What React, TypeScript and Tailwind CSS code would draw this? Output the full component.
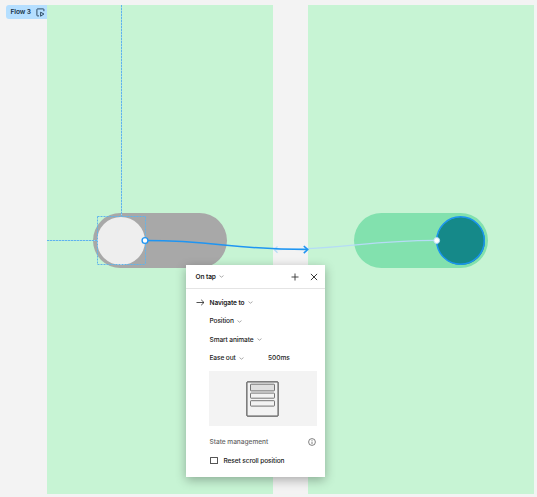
import type { ReactNode } from "react";

function Chevron() {
  return (
    <svg className="ml-[3.5px] h-[3px] w-[5px] shrink-0" viewBox="0 0 5 3" fill="none" stroke="#969696" strokeWidth="0.8">
      <path d="M0.5 0.6 2.5 2.2 4.5 0.6" />
    </svg>
  );
}

function Option({ children, className = "" }: { children: ReactNode; className?: string }) {
  return (
    <div className={`flex items-center ${className}`}>
      <span>{children}</span>
      <Chevron />
    </div>
  );
}

function InteractionPanel() {
  return (
    <section className="absolute left-[186px] top-[265px] flex h-[212px] w-[139px] flex-col bg-white text-[6.6px] font-medium leading-[10px] tracking-[-0.12px] text-[#222] shadow-[0_3px_10px_rgba(0,0,0,0.3)]">
      <header className="flex h-[24px] shrink-0 items-center border-b border-[#e4e4e4] pl-[9.5px] pr-[7px]">
        <Option className="font-semibold">On tap</Option>
        <div className="ml-auto flex items-center gap-[11px]">
          <svg className="size-[8px]" viewBox="0 0 8 8" stroke="#333" strokeWidth="0.9">
            <path d="M4 .5V7.5M.5 4H7.5" />
          </svg>
          <svg className="size-[8px]" viewBox="0 0 8 8" stroke="#222" strokeWidth="0.9">
            <path d="M.9.9 7.1 7.1M7.1.9.9 7.1" />
          </svg>
        </div>
      </header>
      <div className="flex flex-col pl-[23.5px] pr-[9px] pt-[8.5px]">
        <div className="-ml-[13.5px] flex items-center">
          <svg className="mr-[4.5px] h-[7px] w-[9px]" viewBox="0 0 9 7" fill="none" stroke="#333" strokeWidth="0.85">
            <path d="M.5 3.5H8M5.2.8 8 3.5 5.2 6.2" />
          </svg>
          <Option className="font-semibold">Navigate to</Option>
        </div>
        <Option className="mt-[8.5px]">Position</Option>
        <Option className="mt-[8.5px]">Smart animate</Option>
        <div className="mt-[8.5px] flex">
          <Option className="w-[58.5px]">Ease out</Option>
          <span className="tracking-[-0.03px]">500ms</span>
        </div>
        <div className="-ml-[0.5px] mt-[8px] flex h-[55px] w-[108px] items-center justify-center bg-[#f3f3f3] pr-[2px]">
          <svg className="h-[36px] w-[33px]" viewBox="0 0 33 36" fill="none">
            <rect x=".9" y=".9" width="31.2" height="34.2" rx=".4" stroke="#333" strokeWidth="1" />
            <g stroke="#666" strokeWidth=".9">
              <rect x="4.5" y="3.2" width="24" height="6.7" rx=".6" fill="#dfdfdf" />
              <rect x="4.5" y="12.1" width="24" height="5.1" rx=".6" />
              <rect x="4.5" y="19.7" width="24" height="5.4" rx=".6" />
            </g>
          </svg>
        </div>
        <div className="mt-[11px] flex items-center justify-between text-[#666]">
          <span className="tracking-[-0.04px]">State management</span>
          <svg className="mr-[0.5px] size-[8px]" viewBox="0 0 8 8" fill="none" stroke="#555" strokeWidth=".75">
            <circle cx="4" cy="4" r="3.4" />
            <path d="M4 3.6V6M4 2.1v.8" />
          </svg>
        </div>
        <div className="mt-[8.5px] flex items-center">
          <span className="ml-[0.5px] mr-[5.5px] h-[7px] w-[8px] rounded-[0.5px] border border-[#555]" />
          <span>Reset scroll position</span>
        </div>
      </div>
    </section>
  );
}

function Connections() {
  return (
    <svg className="pointer-events-none absolute left-0 top-0 h-[497px] w-[537px]" viewBox="0 0 537 497" fill="none">
      <g stroke="#9fd6ea" strokeWidth="1">
        <path d="M121.5 5V216M47 240.5H97" />
      </g>
      <g stroke="#5fb4ec" strokeWidth="1" strokeDasharray="2 1">
        <path d="M121.5 5V216" />
        <path d="M47 240.5H97" />
        <path d="M97.5 216.5H145.5V264.5" />
        <path d="M97.5 216.5V264.5H145.5" />
      </g>
      <g stroke="#b5dcf5" strokeWidth="1.3">
        <path d="M436 240.4C365 240.4 347 249.5 274 249.5" />
        <path d="M277.5 246.5 274.3 249.5 277.5 252.7" />
      </g>
      <g stroke="#1f95f2" strokeWidth="1.5">
        <path d="M145 240.5C218 240.5 230 249.5 307 249.5" />
        <path d="M303.8 246 307.7 249.6 303.8 253.2" strokeWidth="1.6" />
      </g>
      <circle cx="145" cy="240.5" r="2.9" fill="#fff" stroke="#1f95f2" strokeWidth="1.4" />
      <circle cx="460.5" cy="240.5" r="23.8" stroke="#1a94f0" strokeWidth="1.5" />
      <circle cx="436.7" cy="240.5" r="2.9" fill="#fff" stroke="#b5dcf5" strokeWidth="1" />
    </svg>
  );
}

export default function App() {
  return (
    <main className="relative h-[497px] w-[537px] overflow-hidden bg-[#f3f3f3] font-['Inter','Liberation_Sans',sans-serif]">
      <div className="flex items-start pl-[6px] pt-[5px]">
        <div className="flex h-[14px] w-[41px] shrink-0 items-center rounded-l-[3px] bg-[#b5dfff] pl-[4.5px] text-[6.6px] font-semibold leading-[10px] tracking-[-0.1px] text-[#153047]">
          <span>Flow 3</span>
          <svg className="ml-auto mr-[2.5px] size-[9px]" viewBox="0 0 9 9" fill="none" stroke="#163249" strokeWidth=".85">
            <path d="M3 7.9H1.5A.6.6 0 0 1 .9 7.3V1.5A.6.6 0 0 1 1.5.9H7.3A.6.6 0 0 1 7.9 1.5V3.2" />
            <path d="M4.6 4.2 7.9 6 4.6 8.2Z" />
          </svg>
        </div>
        <div className="h-[489px] w-[226px] shrink-0 bg-[#c7f4d4] pl-[46px] pt-[208px]">
          <div className="flex h-[55px] w-[134px] items-center rounded-full bg-[#a8a8a8] pl-[4px]">
            <div className="size-[48px] rounded-full bg-[#eee]" />
          </div>
        </div>
        <div className="ml-[35px] h-[489px] w-[226px] shrink-0 bg-[#c7f4d4] pl-[45.5px] pt-[208px]">
          <div className="flex h-[55px] w-[134.5px] items-center justify-end rounded-full bg-[#82e1ae] pr-[3.5px]">
            <div className="size-[48px] rounded-full bg-[#158989]" />
          </div>
        </div>
      </div>
      <Connections />
      <InteractionPanel />
    </main>
  );
}
